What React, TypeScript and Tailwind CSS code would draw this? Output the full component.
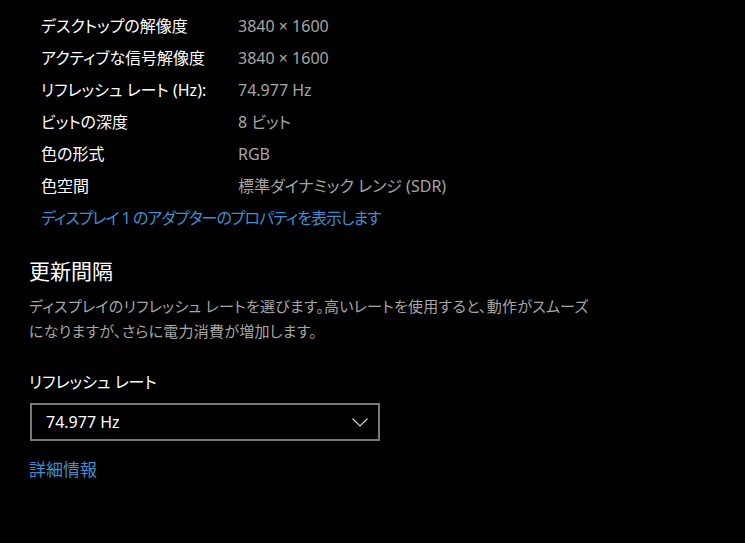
import React from "react";

const rows: [string, string][] = [
  ["デスクトップの解像度", "3840 × 1600"],
  ["アクティブな信号解像度", "3840 × 1600"],
  ["リフレッシュ レート (Hz):", "74.977 Hz"],
  ["ビットの深度", "8 ビット"],
  ["色の形式", "RGB"],
  ["色空間", "標準ダイナミック レンジ (SDR)"],
];

function Chevron() {
  return (
    <svg width="16" height="9" viewBox="0 0 16 9" fill="none">
      <path d="M0.5 0.5 L8 8 L15.5 0.5" stroke="#d0d0d0" strokeWidth="1.2" />
    </svg>
  );
}

export default function App() {
  return (
    <div
      className="w-[745px] h-[543px] bg-black text-white overflow-hidden px-[29px] pt-[10px] [font-feature-settings:'palt']"
      style={{ fontFamily: '"Noto Sans", "Noto Sans CJK JP", sans-serif' }}
    >
      <div className="pl-3">
        {rows.map(([label, value]) => (
          <div key={label} className="flex h-[32px] items-center text-[16px]">
            <span className="w-[197px] whitespace-nowrap">{label}</span>
            <span className="whitespace-nowrap text-[#a6a6a6]">{value}</span>
          </div>
        ))}
        <div className="flex h-[32px] items-center text-[16px] tracking-[-1px] text-[#3e8ed0] whitespace-nowrap">
          ディスプレイ 1 のアダプターのプロパティを表示します
        </div>
      </div>

      <h2 className="mt-[22px] h-[30px] flex items-center text-[21px] leading-[30px]">
        更新間隔
      </h2>
      <p className="mt-[8px] text-[15px] leading-[25px] tracking-[0.25px] text-[#a6a6a6] whitespace-nowrap">
        ディスプレイのリフレッシュ レートを選びます。高いレートを使用すると、動作がスムーズ
        <br />
        になりますが、さらに電力消費が増加します。
      </p>

      <div className="mt-[26px] h-[24px] flex items-center text-[16px]">
        リフレッシュ レート
      </div>
      <div className="mt-[9px] ml-px flex h-[38px] w-[350px] items-center justify-between border-2 border-[#7a7a7a] pl-[14px] pr-[10px] text-[16px]">
        <span>74.977 Hz</span>
        <Chevron />
      </div>

      <div className="mt-[17px] h-[24px] flex items-center text-[17px] text-[#3e8ed0]">
        詳細情報
      </div>
    </div>
  );
}
